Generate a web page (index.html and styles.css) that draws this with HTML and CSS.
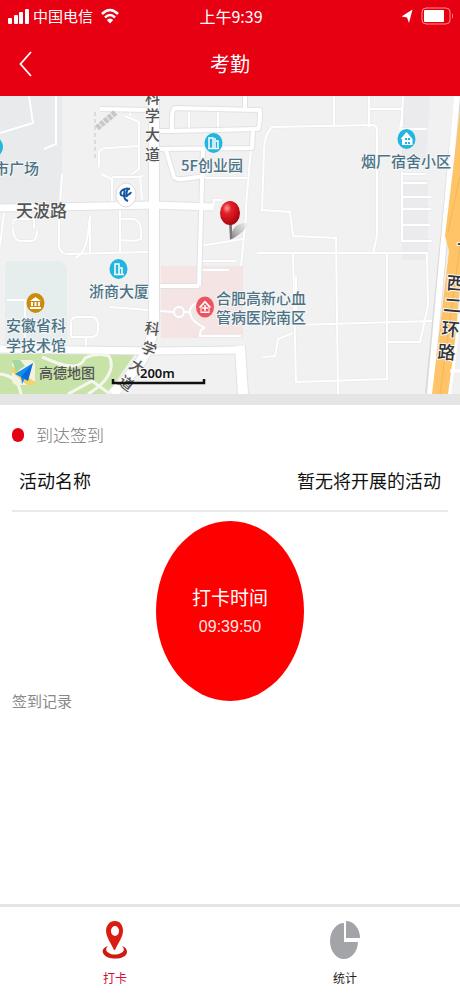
FILE: index.html
```html
<!DOCTYPE html>
<html lang="zh-CN">
<head>
<meta charset="utf-8">
<meta name="viewport" content="width=device-width, initial-scale=1">
<title>考勤</title>
<link rel="stylesheet" href="styles.css">
</head>
<body>
<div class="app">
  <header class="header">
    <div class="status">
      <div class="status-left">
        <svg width="21" height="16" viewBox="0 0 21 16" fill="#fff" aria-hidden="true"><rect x="0" y="10" width="4" height="6" rx="1"/><rect x="6" y="7" width="4" height="9" rx="1"/><rect x="11" y="4" width="4" height="12" rx="1"/><rect x="17" y="1" width="4" height="15" rx="1"/></svg>
        <span class="carrier">中国电信</span>
        <svg class="wifi" width="18" height="16" viewBox="0 0 18 16" aria-hidden="true"><path d="M1 6Q9-2 17 6M4 9.500Q9 4.500 14 9.500" fill="none" stroke="#fff" stroke-width="2.500"/><path d="M5.800 12Q9 9 12.200 12L9 15.500z" fill="#fff"/></svg>
      </div>
      <span class="clock">上午9:39</span>
      <div class="status-right">
        <svg width="12" height="15" viewBox="0 0 12 15" fill="#fff" aria-hidden="true"><path d="M11.500.5 8 14 6 8.500.5 7.500z"/></svg>
        <svg width="33" height="18" viewBox="0 0 33 18" aria-hidden="true"><rect x="1" y="1" width="28" height="16" rx="4" fill="none" stroke="#ff8c90"/><rect x="3" y="3" width="20" height="12" rx="1" fill="#fff"/><path d="M31 6q2 3 0 6z" fill="#ff8c90"/></svg>
      </div>
    </div>
    <div class="nav">
      <button class="back" type="button" aria-label="返回"><svg width="13" height="26" viewBox="0 0 13 26" fill="none" stroke="#fff" stroke-width="1.800" aria-hidden="true"><path d="M12 1 1.500 13 12 25"/></svg></button>
      <h1 class="title">考勤</h1>
    </div>
  </header>

  <main class="main">
    <svg class="map" viewBox="0 0 460 298" role="img" aria-label="地图">
      <defs>
        <radialGradient id="ball" cx=".35" cy=".3" r=".75"><stop offset="0" stop-color="#ff9a94"/><stop offset=".3" stop-color="#e3222a"/><stop offset="1" stop-color="#a80008"/></radialGradient>
        <linearGradient id="shade" x1="0" y1="1" x2="1" y2="0"><stop offset="0" stop-color="#777"/><stop offset="1" stop-color="#ccc" stop-opacity=".3"/></linearGradient>
        <g id="lanes">
          <path d="M0 37 33 27 29 0M56 0V48L44 53M62 78 60 108M5 108 0 150M59 118V150Q60 158 68 158L148 156M90 120V156M120 112V156M13 128Q13 123 18 123H34V132M13 132Q13 144 20 145H31Q37 145 37 135M89 124Q88 158 75 162M121 123H134Q141 125 141 135V143Q136 146 120 144"/>
          <path d="M99 71V58Q99 52 108 52L138 50M125 20 139 26V73L132 78M101 78 112 83V110M112 81H138L143 80M130 13V20M140 80 142 104"/>
          <path d="M334 0V29M272 31 374 29Q377 30 377 36V140L373 158M272 31Q264 39 264 55L262 114 290 116 293 140 336 142 338 298M403 0 402 20 400 33H427M369 0V31M369 13H402V31M402 76V145H432M402 78H425M402 87H427M402 101H431M402 113H431M402 129H430"/>
          <path d="M257 157H427L428 210 420 246H388M293 158 296 286 387 283V158M296 181V230M293 237 278 243 275 260 263 261M295 229 432 225"/>
          <path d="M71 240V227Q71 221 77 221H93Q99 222 98 235 97 241 91 241H71M86 241V257M110 211 173 216M205 232Q200 233 200 238V240H241M7 204H25V250M205 205Q190 207 190 216T205 232M184 216H190"/>
          <circle cx="179" cy="216" r="5"/>
          <path d="M189 13V33M218 13V33M251 52 246 110V120L241 170M213 111 214 104H222M200 150 243 143M200 165H236M200 174H229M201 82H247"/>
        </g>
        <g id="streets">
          <path class="wide" d="M154 0V214Q156 245 137 271L113 298"/>
          <path class="medium" d="M0 112 154 109 213 111M0 253 154 255 239 254"/>
          <path class="wide" d="M240 250 243 298"/>
          <path class="narrow" d="M100 13 149 14M156 35H172L258 33Q260 30 260 14L175 12Q171 13 172 33M156 53 252 52 253 34M166 54 174 81Q176 84 184 83L205 80M203 52 199 190M160 190H199M245 0V12"/>
        </g>
      </defs>
      <rect width="460" height="298" fill="#f1f1f2"/>
      <path d="M0 0H62V108H0z" fill="#e9eaec"/>
      <path d="M5 170Q5 165 10 165H60Q67 168 67 175V258H5z" fill="#e5eeec"/>
      <path d="M161 170H243V242H161z" fill="#f4e4e4"/>
      <path d="M402 0H430L426 70H402zM402 84H428V164H402z" fill="#ebebed"/>
      <path d="M0 258H135L107 298H0z" fill="#c8e3a8"/>

      <use href="#lanes" class="lanes-edge"/>
      <use href="#lanes" class="lanes"/>
      <use href="#streets" class="streets-edge"/>
      <g class="streets">
        <path class="wide" d="M154 0V214Q156 245 137 271L113 298"/>
        <path class="medium" d="M0 112 154 109 213 111M0 253 154 255 239 254"/>
        <path class="wide" d="M240 250 243 298"/>
        <path class="narrow" d="M100 13 149 14M156 35H172L258 33Q260 30 260 14L175 12Q171 13 172 33M156 53 252 52 253 34M166 54 174 81Q176 84 184 83L205 80M203 52 199 190M160 190H199M245 0V12"/>
      </g>
      <path d="M95 16V62" stroke="#c7c7ca" stroke-dasharray="4 3" fill="none"/>
      <path d="M97 32 116 16" stroke="#c8c8ca" stroke-width="6" stroke-dasharray="4 1" fill="none"/>
      <path d="M0 278Q18 280 21 298M42 261 57 267Q80 275 85 262 98 256 109 260 112 265 111 272 108 286 88 298M68 298 92 285 110 298" fill="none" stroke="#f5f7ef" stroke-width="3"/>

      <path d="M458 0 429 298" fill="none" stroke="#d9dadc" stroke-width="8"/>
      <path d="M457 0 430 298" fill="none" stroke="#fff" stroke-width="6"/>
      <path d="M460 15 445 140 449 155 432 298H450L460 190z" fill="#ffc468"/>
      <path d="M460 80 448 136M460 150 440 298" stroke="#f3b658" fill="none"/>
      <path d="M448 298 460 210V298z" fill="#fff"/>
      <path d="M451 298 460 230V298z" fill="#f1f1f2"/>
      <path d="M450 275H460" stroke="#fff" stroke-width="3"/>

      <g class="poi">
        <ellipse cx="-4" cy="51" rx="7" ry="9" fill="#22b7df"/>
        <ellipse cx="213.500" cy="47" rx="9" ry="10" fill="#22b5df"/>
        <path d="M209 52V42H213V52M215 52V42M216 45H218V52M208 52.500H219" class="glyph"/>
        <ellipse cx="118.500" cy="173" rx="9" ry="10" fill="#22b5df"/>
        <path d="M115 178V168H119V178M120 172H122V178M114 178.500H124" class="glyph"/>
        <ellipse cx="406.500" cy="43" rx="9" ry="10" fill="#22b5df"/>
        <path d="M400.500 43 406.500 36 412.500 43V49H402V43z" fill="#fff"/><path d="M405 42H407V44H405zM408 42H410V44H408zM405 46H407V48H405zM408 46H410V48H408z" fill="#22b5df"/>
        <ellipse cx="35.500" cy="207" rx="9" ry="10" fill="#cc8b0c"/>
        <path d="M30 205 35.500 201 41 205zM31 206H33V210H31zM34.500 206H36.500V210H34.500zM38 206H40V210H38zM30 211H41V213H30z" fill="#fff"/>
        <ellipse cx="205" cy="211" rx="9" ry="10.500" fill="#eb5560"/>
        <path d="M198.500 211.500 205 204.500 211.500 211.500H209.500V217H200.500V211.500z" fill="#fff"/><path d="M201.500 211 205 207 208.500 211V215.500H201.500z" fill="#eb5560"/><path d="M205 209V215M202 212H208" class="glyph"/>
        <ellipse cx="126" cy="99" rx="10" ry="12" fill="#fff" stroke="#ddd"/>
        <path d="M130 93C125 91 119 95 121 99 124 101 130 99 131 96M122 94C126 93 124 97 124 99 124 102 125 104 128 105M128 93C126 96 126 98 127 101" fill="none" stroke="#1758a6" stroke-width="2"/>
      </g>

      <path d="M230 143Q232 127 246 127 249 133 232 143z" fill="url(#shade)"/>
      <path d="M229 126H232V142L230 144z" fill="#797979"/>
      <ellipse cx="230" cy="117" rx="10" ry="12" fill="url(#ball)"/>

      <g class="labels">
        <text x="-6" y="78">市广场</text>
        <text x="181" y="75">5F创业园</text>
        <text x="361" y="71">烟厂宿舍小区</text>
        <text x="89" y="201">浙商大厦</text>
        <text x="6" y="235">安徽省科</text><text x="6" y="255">学技术馆</text>
        <text x="216" y="208">合肥高新心血</text><text x="216" y="227">管病医院南区</text>
      </g>
      <g class="road-labels">
        <text x="16" y="121" class="street">天波路</text>
        <text x="145" y="7">科</text><text x="145" y="25">学</text><text x="145" y="44">大</text><text x="145" y="64">道</text>
        <text transform="translate(144 237) rotate(8)">科</text>
        <text transform="translate(140 255) rotate(22)">学</text>
        <text transform="translate(128 271) rotate(35)">大</text>
        <text transform="translate(117 287) rotate(38)">道</text>
      </g>
      <g class="ring-labels">
        <text x="457" y="156">十</text>
        <text transform="translate(446 193) rotate(5)">西</text>
        <text transform="translate(443 215) rotate(5)">二</text>
        <text transform="translate(441 239) rotate(5)">环</text>
        <text transform="translate(437 262) rotate(5)">路</text>
      </g>
      <rect x="12" y="264" width="23" height="25" rx="5" fill="#f4f3df"/>
      <path d="M12 270 35 286V289H27L12 276z" fill="#f2d566"/><path d="M12 264H20L25 270 16 276z" fill="#a6d7a1"/>
      <path d="M33 267 15 278 21 281 22 288z" fill="#148df0"/><path d="M33 267 21 281 28 285z" fill="#0969d7"/>
      <text x="39" y="282" class="brand">高德地图</text>
      <path d="M113 283V287H204V283" fill="none" stroke="#111" stroke-width="2.500"/>
      <text x="140" y="282" class="scale">200m</text>
    </svg>

    <section class="checkin">
      <h2 class="section-title"><span class="dot"></span>到达签到</h2>
      <div class="activity"><span>活动名称</span><span>暂无将开展的活动</span></div>
      <button class="punch" type="button"><span class="punch-label">打卡时间</span><time class="punch-time">09:39:50</time></button>
      <h3 class="record">签到记录</h3>
    </section>
  </main>

  <nav class="tabs">
    <a class="tab active" href="#punch">
      <svg width="26" height="40" viewBox="0 0 26 40" aria-hidden="true"><path d="M6 26C-1 28-1 34 5 37 10 39 17 39 21 37 27 34 26 28 20 26 23 29 22 32 19 33 15 35 10 35 7 33 4 32 3 29 6 26z" fill="#cf1c12"/><path fill-rule="evenodd" d="M13 1C7 1 4 6 4 11 4 17 10 25 12 30H13C16 23 21 17 21 11 21 5 18 1 13 1zM13 6A4 5 0 1 1 13 16 4 5 0 1 1 13 6z" fill="#d91d12"/></svg>
      <span>打卡</span>
    </a>
    <a class="tab" href="#stats">
      <svg width="32" height="40" viewBox="0 0 32 40" fill="#a2a4a7" aria-hidden="true"><path d="M15 3A14 18 0 1 0 29 22H15z"/><path d="M17 1A14 17 0 0 1 31 18H17z"/></svg>
      <span>统计</span>
    </a>
  </nav>
</div>
</body>
</html>
```
FILE: styles.css
```css
* { box-sizing: border-box; }
body {
  margin: 0;
  background: #fff;
  color: #111;
  font-family: "Noto Sans CJK SC", sans-serif;
}
button { border: 0; padding: 0; font: inherit; color: inherit; cursor: pointer; }
svg { display: block; }
h1, h2, h3 { margin: 0; font-weight: 400; }

.app { display: flex; flex-direction: column; min-height: 100vh; }

.header { background: #e70012; color: #fff; }
.status {
  display: grid;
  grid-template-columns: 1fr auto 1fr;
  align-items: center;
  height: 32px;
  padding: 0 6px 0 8px;
  font-size: 16px;
  line-height: 24px;
}
.status-left, .status-right { display: flex; align-items: center; gap: 4px; }
.status-right { justify-content: flex-end; gap: 8px; }
.carrier { font-size: 15px; }
.wifi { margin-left: 4px; }
.nav {
  display: grid;
  grid-template-columns: 48px 1fr 48px;
  align-items: center;
  height: 64px;
}
.back { display: flex; justify-content: flex-end; padding: 8px 16px 8px 0; background: none; }
.title { font-size: 20px; line-height: 28px; text-align: center; }

.main { flex: 1; }
.map {
  width: 100%;
  height: auto;
  overflow: hidden;
}
.lanes { fill: none; stroke: #fff; stroke-width: 2; }
.lanes-edge { fill: none; stroke: #e7e8ea; stroke-width: 3; }
.streets, .streets-edge { fill: none; stroke-linejoin: round; }
.streets { stroke: #fff; }
.streets-edge { stroke: #e1e2e5; }
.wide { stroke-width: 12; }
.medium { stroke-width: 9; }
.narrow { stroke-width: 6; }
.streets .wide { stroke-width: 10; }
.streets .medium { stroke-width: 7; }
.streets .narrow { stroke-width: 4; }
.glyph { fill: none; stroke: #fff; stroke-width: 1.5; }
.map text { paint-order: stroke; stroke: #f7f7f7; stroke-width: 2px; stroke-linejoin: round; }
.labels { font-size: 15px; font-weight: 500; fill: #4c7486; }
.road-labels { font-size: 15px; font-weight: 500; fill: #555; }
.road-labels .street { font-size: 17px; }
.ring-labels { font-size: 18px; font-weight: 500; fill: #333; }
.map .brand { font-size: 14px; font-weight: 500; fill: #555; stroke: none; }
.map .scale { font-family: "Noto Sans", sans-serif; font-size: 13px; font-weight: 600; fill: #111; }

.checkin {
  display: flex;
  flex-direction: column;
  padding: 16px 12px;
  border-top: 11px solid #e5e5e5;
}
.section-title {
  display: flex;
  align-items: center;
  gap: 12px;
  font-size: 17px;
  font-weight: 300;
  line-height: 28px;
  color: #777;
}
.dot { width: 12px; height: 14px; border-radius: 6px; background: #e60012; }
.activity {
  display: flex;
  justify-content: space-between;
  padding: 16px 7px 15px;
  border-bottom: 2px solid #e9e9e9;
  font-size: 18px;
  line-height: 30px;
}
.punch {
  display: flex;
  flex-direction: column;
  align-items: center;
  justify-content: center;
  align-self: center;
  width: 148px;
  height: 180px;
  margin-top: 9px;
  border-radius: 50%;
  background: #fe0000;
  color: #fff;
}
.punch-label { font-size: 19px; line-height: 32px; }
.punch-time { font-family: "Liberation Sans", sans-serif; font-size: 16px; line-height: 28px; opacity: .9; }
.record { margin-top: -14px; font-size: 15px; line-height: 28px; color: #888; }

.tabs { display: flex; border-top: 3px solid #e5e5e5; }
.tab {
  flex: 1;
  display: flex;
  flex-direction: column;
  align-items: center;
  gap: 8px;
  padding: 13px 0 8px;
  font-size: 12px;
  line-height: 20px;
  color: #222;
  text-decoration: none;
}
.tab.active { color: #d5103c; }
```
